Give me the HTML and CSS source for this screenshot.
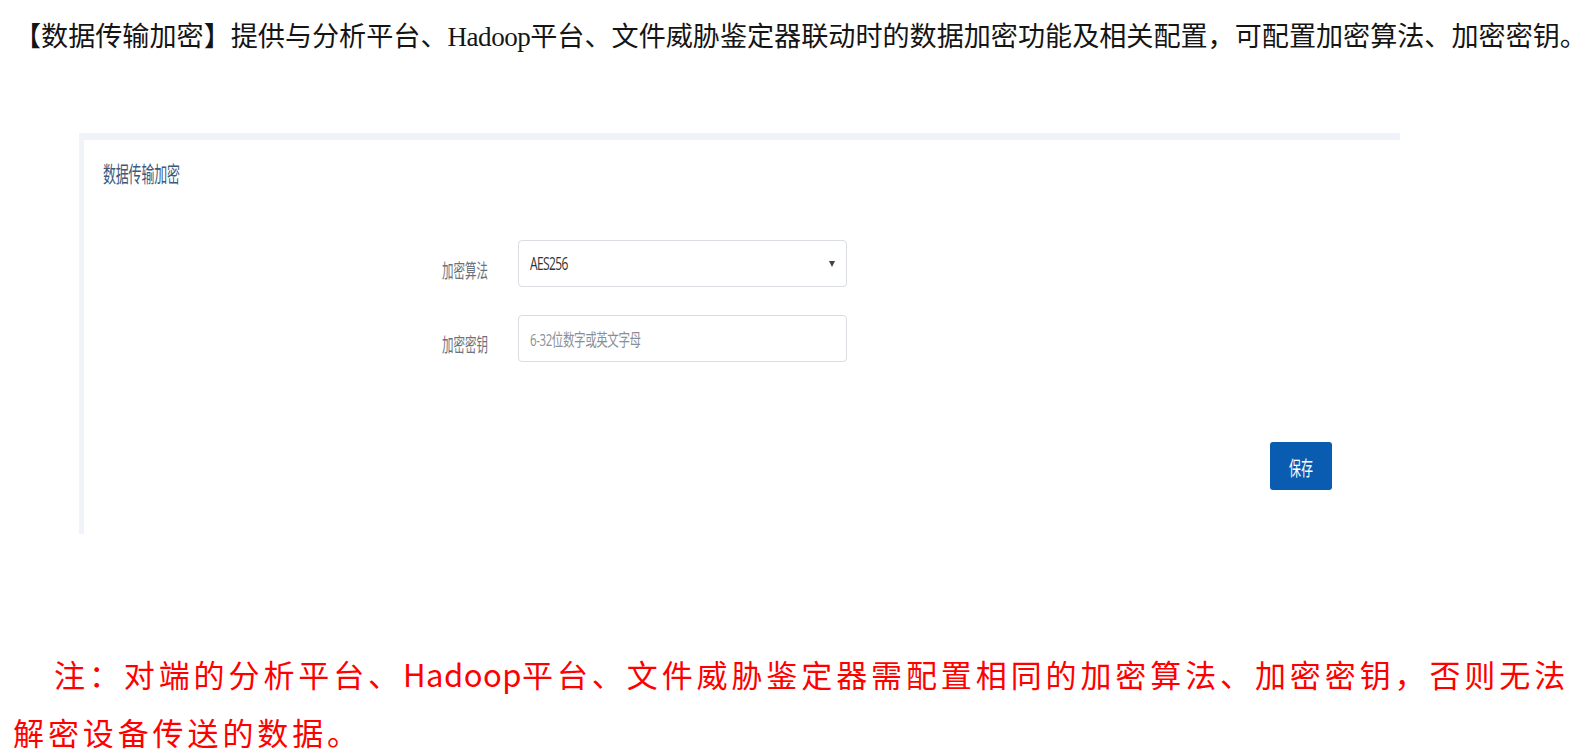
FILE: index.html
```html
<!DOCTYPE html>
<html lang="zh-CN">
<head>
<meta charset="utf-8">
<title>数据传输加密</title>
<link rel="stylesheet" href="styles.css">
</head>
<body>
<p class="intro">【数据传输加密】提供与分析平台、<span class="latin">Hadoop</span>平台、文件威胁鉴定器联动时的数据加密功能及相关配置，可配置加密算法、加密密钥。</p>

<section class="panel">
  <h2 class="panel-title"><span class="tall">数据传输加密</span></h2>
  <div class="form">
    <label class="form-label"><span class="tall">加密算法</span></label>
    <div class="select">
      <span class="tall value">AES256</span>
      <span class="caret"></span>
    </div>
    <label class="form-label"><span class="tall">加密密钥</span></label>
    <div class="input">
      <span class="tall placeholder">6-32位数字或英文字母</span>
    </div>
  </div>
  <div class="actions">
    <button class="btn-primary"><span class="tall">保存</span></button>
  </div>
</section>

<p class="note">注：对端的分析平台、<span class="note-latin">Hadoop</span>平台、文件威胁鉴定器需配置相同的加密算法、加密密钥，否则无法解密设备传送的数据。</p>
</body>
</html>
```

FILE: styles.css
```css
html, body {
  margin: 0;
  padding: 0;
  background: #ffffff;
}

body {
  width: 1593px;
  font-family: "Noto Sans CJK SC", "Noto Sans", sans-serif;
}

.intro {
  margin: 0;
  padding: 15px 0 0 14px;
  font-size: 27.1px;
  line-height: 40px;
  color: #151515;
  white-space: nowrap;
}

.latin {
  font-family: "Liberation Serif", serif;
  letter-spacing: -0.5px;
}

.panel {
  margin: 76px 0 0 79px;
  width: 1316px;
  height: 394px;
  border-top: 7px solid #f0f4fa;
  border-left: 5px solid #f0f4fa;
  background: #ffffff;
  display: flex;
  flex-direction: column;
}

.tall {
  display: inline-block;
  transform: scaleY(1.7);
}

.panel-title {
  margin: 22px 0 0 19px;
  height: 22px;
  line-height: 22px;
  font-size: 13px;
  font-weight: normal;
  color: #3d5a7e;
  letter-spacing: -0.2px;
}

.form {
  margin: 56px 0 0 304px;
  display: grid;
  grid-template-columns: 100px 329px;
  column-gap: 30px;
  row-gap: 28px;
}

.form-label {
  text-align: right;
  font-size: 11.5px;
  color: #6a7280;
  padding-top: 18px;
  line-height: 22px;
}

.select, .input {
  box-sizing: border-box;
  height: 47px;
  border: 1px solid #d9dce1;
  border-radius: 4px;
  display: flex;
  align-items: center;
  padding: 0 10px 0 11px;
  font-size: 12px;
}

.select {
  justify-content: space-between;
}

.value {
  font-family: "Open Sans", "Noto Sans CJK SC", sans-serif;
  color: #333333;
  letter-spacing: -0.6px;
  transform: scaleY(1.5);
}

.placeholder {
  font-family: "Open Sans", "Noto Sans CJK SC", sans-serif;
  color: #8a8f96;
  font-size: 11.5px;
  letter-spacing: -0.4px;
  transform: scaleY(1.45);
}

.caret {
  width: 0;
  height: 0;
  border-left: 3.5px solid transparent;
  border-right: 3.5px solid transparent;
  border-top: 6px solid #444444;
  margin-right: 1px;
}

.actions {
  margin-top: 80px;
  display: flex;
  justify-content: flex-end;
  padding-right: 68px;
}

.btn-primary {
  width: 62px;
  height: 48px;
  border: none;
  border-radius: 3px;
  background: #0a5cb0;
  color: #ffffff;
  font-family: "Noto Sans CJK SC", sans-serif;
  font-size: 12px;
  padding: 0;
}

.note {
  margin: 111px 0 0 0;
  padding-left: 13px;
  text-indent: 41px;
  font-size: 31px;
  line-height: 58px;
  letter-spacing: 3.9px;
  color: #ff0000;
  width: 1578px;
}

.note-latin {
  letter-spacing: 0.5px;
}
```
